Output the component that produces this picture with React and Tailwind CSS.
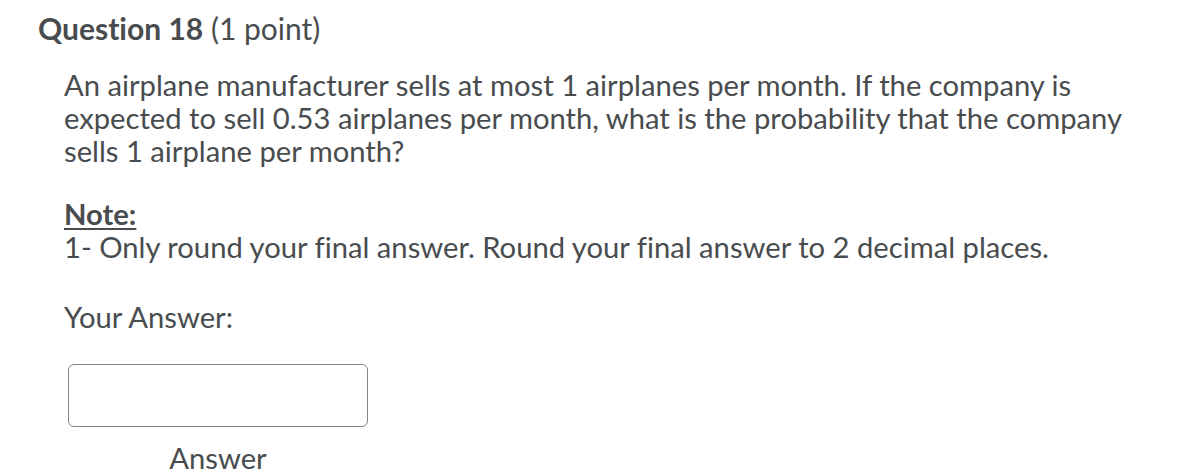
export default function App() {
  return (
    <div
      className="w-[1190px] h-[472px] bg-white text-[#494c4e] overflow-hidden [font-variant-ligatures:none]"
      style={{ fontFamily: "Lato, 'Open Sans', sans-serif" }}
    >
      <div className="pl-[38px] pt-[10px]">
        <h2 className="text-[30px] leading-[36px]">
          <span className="font-bold">Question 18</span> (1 point)
        </h2>
        <div className="pl-[26px] pt-[22px] text-[29.2px] leading-[33px] w-[1110px]">
          <p>
            An airplane manufacturer sells at most 1 airplanes per month. If the company is
            expected to sell 0.53 airplanes per month, what is the probability that the company
            sells 1 airplane per month?
          </p>
          <p className="mt-[30px]">
            <span className="font-bold underline underline-offset-[3px]">Note:</span>
          </p>
          <p>1- Only round your final answer. Round your final answer to 2 decimal places.</p>
          <p className="mt-[37px]">Your Answer:</p>
          <div className="mt-[31px] ml-[4px] w-[300px] flex flex-col items-center">
            <div className="w-[300px] h-[63px] rounded-[6px] border border-[#868686] bg-white" />
            <div className="mt-[14px] leading-[33px]">Answer</div>
          </div>
        </div>
      </div>
    </div>
  );
}
